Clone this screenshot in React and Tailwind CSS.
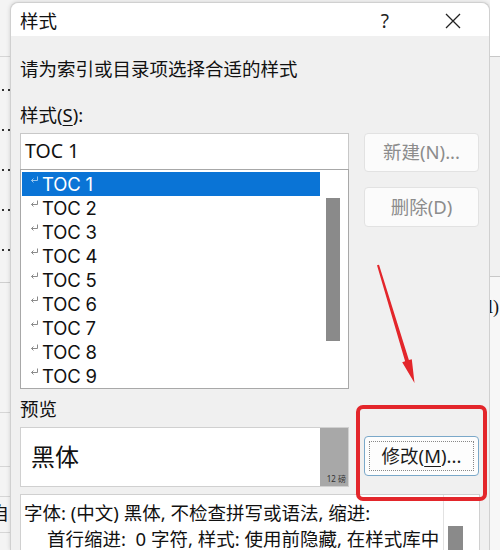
import React from 'react'

const font = { fontFamily: '"Noto Sans", "Noto Sans CJK SC", sans-serif' }

function ReturnMark({ selected }) {
  return (
    <svg width="9" height="8" viewBox="0 0 9 8" className="mt-[4px] mr-[3px] shrink-0">
      <path d="M7.5 0.5 V4.5 H1.5 M3.5 2.5 L1.5 4.5 L3.5 6.5" fill="none" stroke={selected ? '#9cc8ee' : '#8a8a8a'} strokeWidth="1" />
    </svg>
  )
}

function TocList() {
  const items = ['TOC 1', 'TOC 2', 'TOC 3', 'TOC 4', 'TOC 5', 'TOC 6', 'TOC 7', 'TOC 8', 'TOC 9']
  return (
    <div className="flex h-[220px] border border-[#a8a8a8] bg-white">
      <div className="flex-1 pl-[1px] pt-[2px]">
        {items.map((t, i) => (
          <div
            key={t}
            className={`flex h-[24px] items-start pl-[8px] ${i === 0 ? 'bg-[#0a74d6] text-white' : 'text-[#111]'}`}
          >
            <ReturnMark selected={i === 0} />
            <span className="font-['Inter'] text-[18.5px] leading-[24px] tracking-[-0.2px]">{t}</span>
          </div>
        ))}
      </div>
      <div className="w-[28px] pt-[28px] pl-[6px]">
        <div className="h-[143px] w-[14px] bg-[#8a8a8a]" />
      </div>
    </div>
  )
}

function LeftStrip() {
  const dots = [0, 1, 2, 3, 4]
  return (
    <div className="w-[10px] shrink-0 overflow-hidden bg-[#f4f4f4]">
      <div className="h-[57px] border-b border-[#d6d6d6]" />
      <div className="flex h-[226px] flex-col border-b border-[#cfcfcf]">
        {dots.map((i) => (
          <div key={i} className="mt-[38px] flex gap-[4px] pl-[2px] first:mt-[32px]">
            <div className="h-[2px] w-[2px] bg-[#333]" />
            <div className="h-[2px] w-[2px] bg-[#333]" />
          </div>
        ))}
      </div>
      <div className="h-[130px] border-b border-[#d6d6d6]" />
      <div className="h-[54px] border-b border-[#d6d6d6]" />
      <div className="h-[30px] border-b border-[#d6d6d6]" />
      <div className="h-[36px] border-b border-[#d6d6d6] pt-[4px]">
        <div className="ml-[-9px] text-[18px] leading-[24px] text-[#111]">自</div>
      </div>
    </div>
  )
}

function RightStrip() {
  return (
    <div className="w-[10px] shrink-0 overflow-hidden bg-[#f7f7f7]">
      <div className="h-[57px] border-b border-[#c8c8c8] bg-white" />
      <div className="h-[220px] border-b border-[#c8c8c8] bg-[#f1f1f1]" />
      <div className="pt-[18px]">
        <div className="ml-[-2px] font-['Liberation_Serif'] text-[18px] leading-[24px] text-[#111]">l)</div>
      </div>
    </div>
  )
}

function Btn({ children, disabled, focused, className = '' }) {
  return (
    <div
      className={`flex items-center justify-center rounded-[4px] border text-[18.5px] ${
        disabled ? 'border-[#e2e2e2] bg-[#fbfbfb] text-[#8c8c8c]' : 'border-[#7aa8c9] bg-[#fdfdfd] text-[#1a1a1a]'
      } ${className}`}
    >
      {focused ? (
        <div className="flex h-[30px] w-[105px] items-center justify-center border border-dotted border-[#888]">{children}</div>
      ) : (
        children
      )}
    </div>
  )
}

export default function App() {
  return (
    <div className="relative flex h-[550px] w-[500px] overflow-hidden bg-[#f4f4f4]" style={font}>
      <LeftStrip />
      <div className="mt-[2px] flex w-[480px] shrink-0 flex-col rounded-t-[8px] border border-b-0 border-[#d0d0d0] bg-[#f0f0f0] shadow-[0_0_4px_rgba(0,0,0,0.15)]">
        <div className="flex h-[43px] items-center rounded-t-[8px] bg-white pl-[9px] pr-[28px] pt-[4px]">
          <span className="flex-1 text-[18.5px] text-[#111]">样式</span>
          <span className="mr-[56px] text-[19px] text-[#222]">?</span>
          <svg width="16" height="16" viewBox="0 0 16 16">
            <path d="M1 1 L15 15 M15 1 L1 15" stroke="#222" strokeWidth="1.3" />
          </svg>
        </div>
        <div className="flex flex-1 flex-col px-[9px] text-[#111]">
          <div className="mt-[21px] text-[18.5px] leading-[24px]">请为索引或目录项选择合适的样式</div>
          <div className="mt-[22px] text-[18.5px] leading-[24px]">
            样式(<span className="underline underline-offset-[3px]">S</span>):
          </div>
          <div className="mt-[6px] flex">
            <div className="w-[329px]">
              <div className="flex h-[36px] items-center border border-b-0 border-[#c8c8c8] bg-white pl-[4px] text-[19.5px]">TOC 1</div>
              <TocList />
            </div>
            <div className="ml-[15px] flex w-[115px] flex-col">
              <Btn disabled className="h-[39px]">新建(N)...</Btn>
              <Btn disabled className="mt-[15px] h-[40px]">删除(D)</Btn>
            </div>
          </div>
          <div className="mt-[8px] text-[18.5px] leading-[24px]">预览</div>
          <div className="mt-[6px] flex">
            <div className="flex h-[60px] w-[329px] border border-[#d0d0d0] bg-white">
              <div className="flex flex-1 items-center pl-[10px] text-[24px] text-[#111]">黑体</div>
              <div className="flex w-[28px] items-end justify-end bg-[#a8a8a8] pb-[2px] pr-[2px] text-[8px] leading-[10px] text-[#333]">
                12 磅
              </div>
            </div>
            <Btn focused className="ml-[15px] mt-[9px] h-[40px] w-[115px]">
              修改(<span className="underline underline-offset-[3px]">M</span>)...
            </Btn>
          </div>
          <div className="mt-[7px] flex flex-1 border border-b-0 border-[#d0d0d0] bg-white pr-[8px]">
            <div className="flex-1 pl-[3px] pt-[5px] text-[18.5px] leading-[26px] text-[#111]">
              <div>字体: (中文) 黑体, 不检查拼写或语法, 缩进:</div>
              <div className="pl-[23px]">首行缩进:&nbsp; 0 字符, 样式: 使用前隐藏, 在样式库中</div>
            </div>
            <div className="w-[28px] border-l border-[#e2e2e2] pl-[4px] pt-[31px]">
              <div className="h-[30px] w-[15px] bg-[#8a8a8a]" />
            </div>
          </div>
        </div>
      </div>
      <RightStrip />

      <div className="pointer-events-none absolute left-[356px] top-[405px] h-[96px] w-[131px] rounded-[7px] border-[4px] border-[#e3262b]" />
      <svg className="pointer-events-none absolute left-0 top-0" width="500" height="550">
        <polygon
          points="377,265.3 379,264.7 408.9,360.1 411.8,359.3 414.5,383 402.2,362.2 405.1,361.3"
          fill="#e3262b"
        />
      </svg>
    </div>
  )
}
